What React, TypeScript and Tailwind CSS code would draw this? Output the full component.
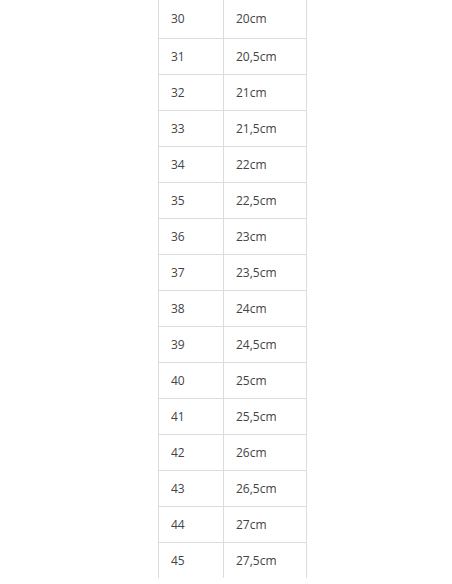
import React from "react";

const ROWS: [string, string][] = [
    ["30", "20cm"],
    ["31", "20,5cm"],
    ["32", "21cm"],
    ["33", "21,5cm"],
    ["34", "22cm"],
    ["35", "22,5cm"],
    ["36", "23cm"],
    ["37", "23,5cm"],
    ["38", "24cm"],
    ["39", "24,5cm"],
    ["40", "25cm"],
    ["41", "25,5cm"],
    ["42", "26cm"],
    ["43", "26,5cm"],
    ["44", "27cm"],
    ["45", "27,5cm"],
];

const App: React.FC = () => {
    return (
        <div className="w-[452px] h-[584px] bg-white overflow-hidden">
            <div className="ml-[158px] flex flex-col w-[149px] border-x border-[#dcdcdc] text-[12px] text-[#444]" style={{ fontFamily: "'Open Sans', sans-serif" }}>
                {ROWS.map(([size, len], i) => (
                    <div
                        key={size}
                        className={`flex ${i === 0 ? "h-[38px]" : "h-[36px] border-t border-[#dcdcdc]"}`}
                    >
                        <div className="w-[65px] border-r border-[#dcdcdc] flex items-center pl-[12px]">{size}</div>
                        <div className="flex-1 flex items-center pl-[12px]">{len}</div>
                    </div>
                ))}
            </div>
        </div>
    );
};

export default App;
